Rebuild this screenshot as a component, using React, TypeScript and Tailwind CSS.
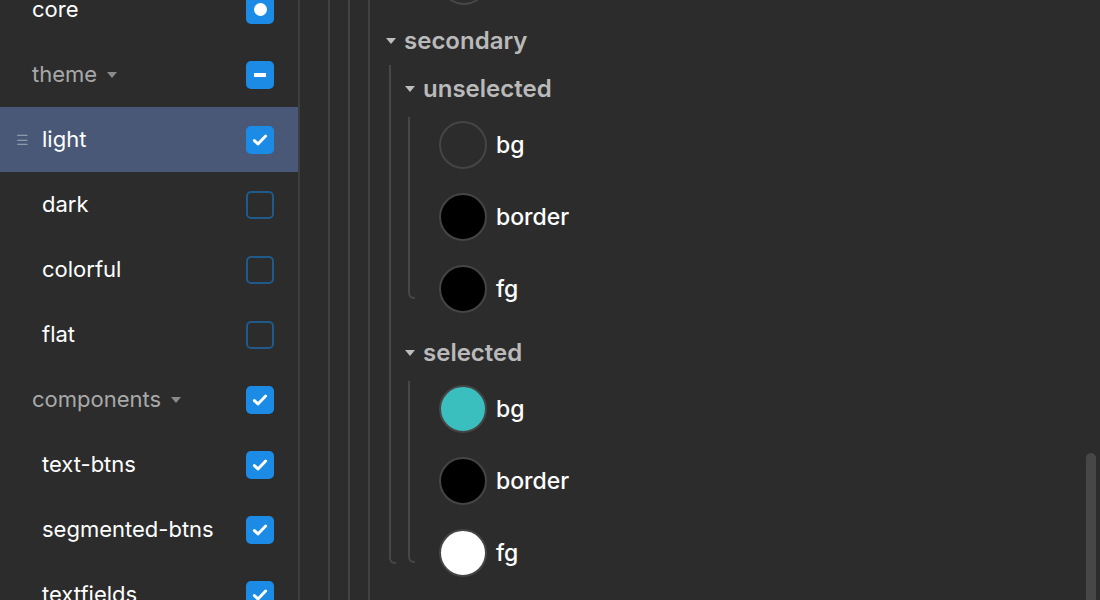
import React from "react";

type Box = "dot" | "dash" | "check" | "empty";

const sideRows: { label: string; kind: "group" | "item"; box: Box; active?: boolean }[] = [
  { label: "core", kind: "group", box: "dot" },
  { label: "theme", kind: "group", box: "dash" },
  { label: "light", kind: "item", box: "check", active: true },
  { label: "dark", kind: "item", box: "empty" },
  { label: "colorful", kind: "item", box: "empty" },
  { label: "flat", kind: "item", box: "empty" },
  { label: "components", kind: "group", box: "check" },
  { label: "text-btns", kind: "item", box: "check" },
  { label: "segmented-btns", kind: "item", box: "check" },
  { label: "textfields", kind: "item", box: "check" },
];

function Caret({ className }: { className?: string }) {
  return (
    <svg width="12" height="8" viewBox="0 0 12 8" className={className}>
      <path d="M1 1h10L6 7z" fill="currentColor" />
    </svg>
  );
}

function CheckBox({ box }: { box: Box }) {
  if (box === "empty") {
    return <div className="w-[28px] h-[28px] rounded-[5px] border-2 border-[#1f5a8b]" />;
  }
  return (
    <div className="w-[28px] h-[28px] rounded-[5px] bg-[#1b8be6] flex items-center justify-center">
      {box === "dot" && <div className="w-[13px] h-[13px] rounded-full bg-white" />}
      {box === "dash" && <div className="w-[12px] h-[4px] bg-white" />}
      {box === "check" && (
        <svg width="18" height="18" viewBox="0 0 16 16">
          <path d="M3 8.5l3.2 3L13 4.5" stroke="white" strokeWidth="2.6" fill="none" strokeLinecap="round" strokeLinejoin="round" />
        </svg>
      )}
    </div>
  );
}

function Sidebar() {
  return (
    <div className="w-[300px] shrink-0 border-r-2 border-[#3e3e3e] overflow-hidden">
      <div className="-mt-[23px]">
        {sideRows.map((r) => (
          <div
            key={r.label}
            className={`h-[65px] flex items-center pr-[24px] ${r.active ? "bg-[#485876]" : ""}`}
          >
            <div className="w-[32px] flex justify-center pl-[12px]">
              {r.active && <span className="text-[#8f99ad] text-[14px] leading-none">☰</span>}
            </div>
            <div className="flex-1 flex items-center">
              {r.kind === "group" ? (
                <>
                  <span className="text-[22px] text-[#a9a9a9]">{r.label === "core" ? <span className="text-white">core</span> : r.label}</span>
                  {r.label !== "core" && <Caret className="ml-[9px] text-[#8a8a8a]" />}
                </>
              ) : (
                <span className="pl-[10px] text-[22px] text-white">{r.label}</span>
              )}
            </div>
            <CheckBox box={r.box} />
          </div>
        ))}
      </div>
    </div>
  );
}

function Swatch({ color, label }: { color: string; label: string }) {
  return (
    <div className="h-[72px] flex items-center">
      <div className="w-[48px] h-[48px] rounded-full border-2 border-[#454545]" style={{ backgroundColor: color }} />
      <span className="ml-[9px] text-[23px] font-medium text-white">{label}</span>
    </div>
  );
}

function Header({ label }: { label: string }) {
  return (
    <div className="h-[48px] flex items-center">
      <Caret className="text-[#bdbdbd]" />
      <span className="ml-[7px] text-[24px] font-semibold text-[#bababa]">{label}</span>
    </div>
  );
}

function Guide({ mt, mb }: { mt: string; mb: string }) {
  return <div className={`w-[7px] shrink-0 border-l-2 border-b-2 border-[#474747] rounded-bl-[6px] ${mt} ${mb}`} />;
}

function Group({ label, items }: { label: string; items: [string, string][] }) {
  return (
    <div>
      <Header label={label} />
      <div className="flex -mt-[4px] pl-[4px]">
        <Guide mt="mt-[8px]" mb="mb-[26px]" />
        <div className="pl-[24px]">
          {items.map(([c, l]) => (
            <Swatch key={l} color={c} label={l} />
          ))}
        </div>
      </div>
    </div>
  );
}

export default function App() {
  return (
    <div
      className="w-[1100px] h-[600px] flex bg-[#2c2c2c] overflow-hidden relative"
      style={{ fontFamily: "Inter, 'Noto Sans', sans-serif" }}
    >
      <Sidebar />
      <div className="flex-1 flex pl-[28px] overflow-hidden">
        <div className="w-[2px] bg-[#424242]" />
        <div className="w-[2px] bg-[#424242] ml-[18px]" />
        <div className="w-[2px] bg-[#424242] ml-[18px]" />
        <div className="pl-[15px] -mt-[55px]">
          <div className="pl-[55px]">
            <Swatch color="#2c2c2c" label="" />
          </div>
          <Header label="secondary" />
          <div className="flex pl-[4px]">
            <Guide mt="mt-[0px]" mb="mb-[25px]" />
            <div className="pl-[8px]">
              <Group
                label="unselected"
                items={[
                  ["transparent", "bg"],
                  ["#000000", "border"],
                  ["#000000", "fg"],
                ]}
              />
              <div className="mt-[4px]">
                <Group
                  label="selected"
                  items={[
                    ["#3abebe", "bg"],
                    ["#000000", "border"],
                    ["#ffffff", "fg"],
                  ]}
                />
              </div>
            </div>
          </div>
        </div>
      </div>
      <div className="absolute right-[4px] top-[453px] w-[10px] h-[200px] rounded-full bg-[#474747]" />
    </div>
  );
}
